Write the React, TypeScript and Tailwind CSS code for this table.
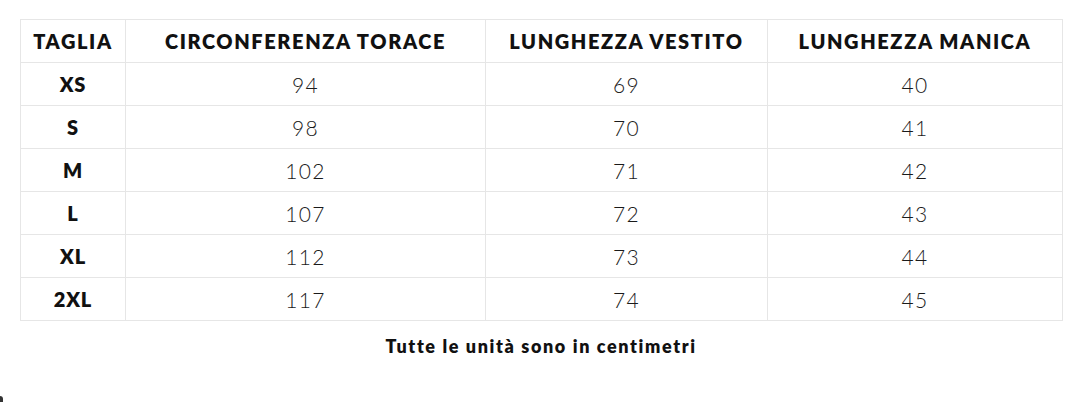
const rows = [
  ["XS", "94", "69", "40"],
  ["S", "98", "70", "41"],
  ["M", "102", "71", "42"],
  ["L", "107", "72", "43"],
  ["XL", "112", "73", "44"],
  ["2XL", "117", "74", "45"],
];

const headers = ["TAGLIA", "CIRCONFERENZA TORACE", "LUNGHEZZA VESTITO", "LUNGHEZZA MANICA"];

export default function App() {
  return (
    <div
      className="relative w-[1080px] h-[402px] bg-white text-[#111]"
      style={{ fontFamily: "Lato, 'Liberation Sans', sans-serif" }}
    >
      <div className="pt-[19px] pl-[20px]">
        <table className="table-fixed border-collapse w-[1042px]">
          <colgroup>
            <col className="w-[105px]" />
            <col className="w-[360px]" />
            <col className="w-[282px]" />
            <col className="w-[295px]" />
          </colgroup>
          <thead>
            <tr className="h-[43px]">
              {headers.map((h) => (
                <th
                  key={h}
                  className="border border-[#e6e6e6] text-center text-[20px] font-extrabold tracking-[0.08em] leading-none"
                >
                  {h}
                </th>
              ))}
            </tr>
          </thead>
          <tbody>
            {rows.map((r) => (
              <tr key={r[0]} className="h-[43px]">
                <td className="border border-[#e6e6e6] text-center text-[20px] font-extrabold tracking-[0.04em] leading-none">
                  {r[0]}
                </td>
                {r.slice(1).map((v, i) => (
                  <td
                    key={i}
                    className="border border-[#e6e6e6] text-center text-[21px] font-light text-[#1a1a1a] tracking-[0.06em] leading-none"
                  >
                    {v}
                  </td>
                ))}
              </tr>
            ))}
          </tbody>
        </table>
        <p className="mt-[12px] text-center text-[18px] font-extrabold tracking-[0.09em] w-[1042px]">
          Tutte le unità sono in centimetri
        </p>
      </div>
      <div className="absolute left-0 top-[396px] w-[3px] h-[6px] bg-[#333] rounded-tr-sm" />
    </div>
  );
}
